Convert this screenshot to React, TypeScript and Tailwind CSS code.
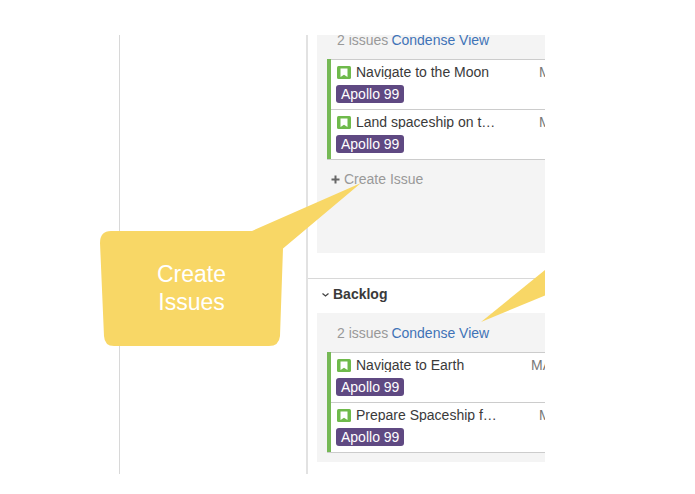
import React from 'react';

interface Issue {
  title: string;
  project: string;
  epic: string;
  wide?: boolean;
}

const sprintIssues: Issue[] = [
  { title: 'Navigate to the Moon', project: 'M', epic: 'Apollo 99' },
  { title: 'Land spaceship on t…', project: 'M', epic: 'Apollo 99' },
];

const backlogIssues: Issue[] = [
  { title: 'Navigate to Earth', project: 'MA', epic: 'Apollo 99', wide: true },
  { title: 'Prepare Spaceship f…', project: 'M', epic: 'Apollo 99' },
];

export default function App() {
  return (
    <div className="min-h-screen bg-white font-['Liberation_Sans',Arial,sans-serif] text-sm text-[#3a3a3a]">
      <div className="relative pt-[35px] pr-[150px] pb-5 pl-[119px]">
        <div className="flex overflow-hidden">
          <aside className="w-[187px] shrink-0 border-l border-[#d8d8d8]" />
          <main className="min-w-0 flex-1 border-l-2 border-[#e2e2e2] pb-3">
            {/* Sprint, scrolled partly out of view */}
            <section className="-mt-[15px] ml-[9px] bg-[#f4f4f4] pb-[65px] pl-[10px]">
              <PanelHeader count={sprintIssues.length} />
              <IssueList issues={sprintIssues} />
              <button className="mt-[10px] ml-1 flex h-[18px] items-center gap-1 text-[#999]">
                <svg className="h-[9px] w-[9px]" viewBox="0 0 9 9" aria-hidden="true">
                  <path d="M4.5 .5v8M.5 4.5h8" stroke="#666" strokeWidth="2" />
                </svg>
                Create Issue
              </button>
            </section>

            <section className="mt-[25px] border-t border-[#d8d8d8]">
              <h2 className="ml-[13px] flex h-[34px] items-center gap-[3px] pb-1 font-bold">
                <svg className="h-[9px] w-[9px]" viewBox="0 0 9 9" aria-hidden="true">
                  <path d="M1.5 3.500l3 2.500 3-2.500" fill="none" stroke="#444" strokeWidth="1.3" />
                </svg>
                Backlog
              </h2>
              <div className="ml-[9px] bg-[#f4f4f4] pb-[9px] pl-[10px]">
                <PanelHeader count={backlogIssues.length} />
                <IssueList issues={backlogIssues} />
              </div>
            </section>
          </main>
        </div>

        {/* Callouts */}
        <svg
          className="pointer-events-none absolute top-[183px] left-[100px] h-[163px] w-[262px]"
          viewBox="0 0 262 163"
          aria-hidden="true"
        >
          <path
            d="M11 48H152L261 0 183 65.500 180 153Q179 163 169 163H14Q4.500 163 4 153L0 60Q0 48 11 48Z"
            fill="#f8d766"
          />
        </svg>
        <p className="absolute top-[231px] left-[100px] flex h-[113px] w-[183px] items-center justify-center text-center text-[23px] leading-[28px] text-white">
          Create
          <br />
          Issues
        </p>
        <svg
          className="pointer-events-none absolute top-[270px] right-[150px] h-[52px] w-16"
          viewBox="0 0 64 52"
          aria-hidden="true"
        >
          <path d="M64 0V25.500L0 52Z" fill="#f8d766" />
        </svg>
      </div>
    </div>
  );
}

function PanelHeader({ count }: { count: number }) {
  return (
    <div className="flex h-[39px] items-center gap-[3px] pl-[10px]">
      <span className="text-[#999]">{count} issues</span>
      <a href="#condense" className="text-[#3f73b7]">
        Condense View
      </a>
    </div>
  );
}

function IssueList({ issues }: { issues: Issue[] }) {
  return (
    <ul className="border-b border-[#ccc]">
      {issues.map((issue) => (
        <IssueCard key={issue.title} issue={issue} />
      ))}
    </ul>
  );
}

function IssueCard({ issue }: { issue: Issue }) {
  return (
    <li className="flex h-[50px] bg-white">
      <div className="w-1 shrink-0 bg-[#76b956]" />
      <div className="min-w-0 flex-1 border-t border-[#ccc] pt-[5px] pl-[5px]">
        <div className="flex h-[14px] gap-[5px] pl-px leading-[14px]">
          <StoryIcon />
          <span className="min-w-0 flex-1 overflow-hidden whitespace-nowrap">{issue.title}</span>
          <span className={`shrink-0 overflow-hidden text-[#777] ${issue.wide ? 'w-[14px]' : 'w-[6px]'}`}>
            {issue.project}
          </span>
        </div>
        <span className="mt-[6px] flex h-[18px] w-fit items-center rounded-[3px] bg-[#5f4982] px-[5px] leading-[18px] text-white">
          {issue.epic}
        </span>
      </div>
    </li>
  );
}

function StoryIcon() {
  return (
    <svg className="h-[14px] w-[14px] shrink-0" viewBox="0 0 14 14" aria-hidden="true">
      <rect y="1" width="14" height="13" rx="1.500" fill="#6fba4b" />
      <path d="M3.500 3.500h7v8.500L7 9.800 3.500 12Z" fill="#fff" />
    </svg>
  );
}
